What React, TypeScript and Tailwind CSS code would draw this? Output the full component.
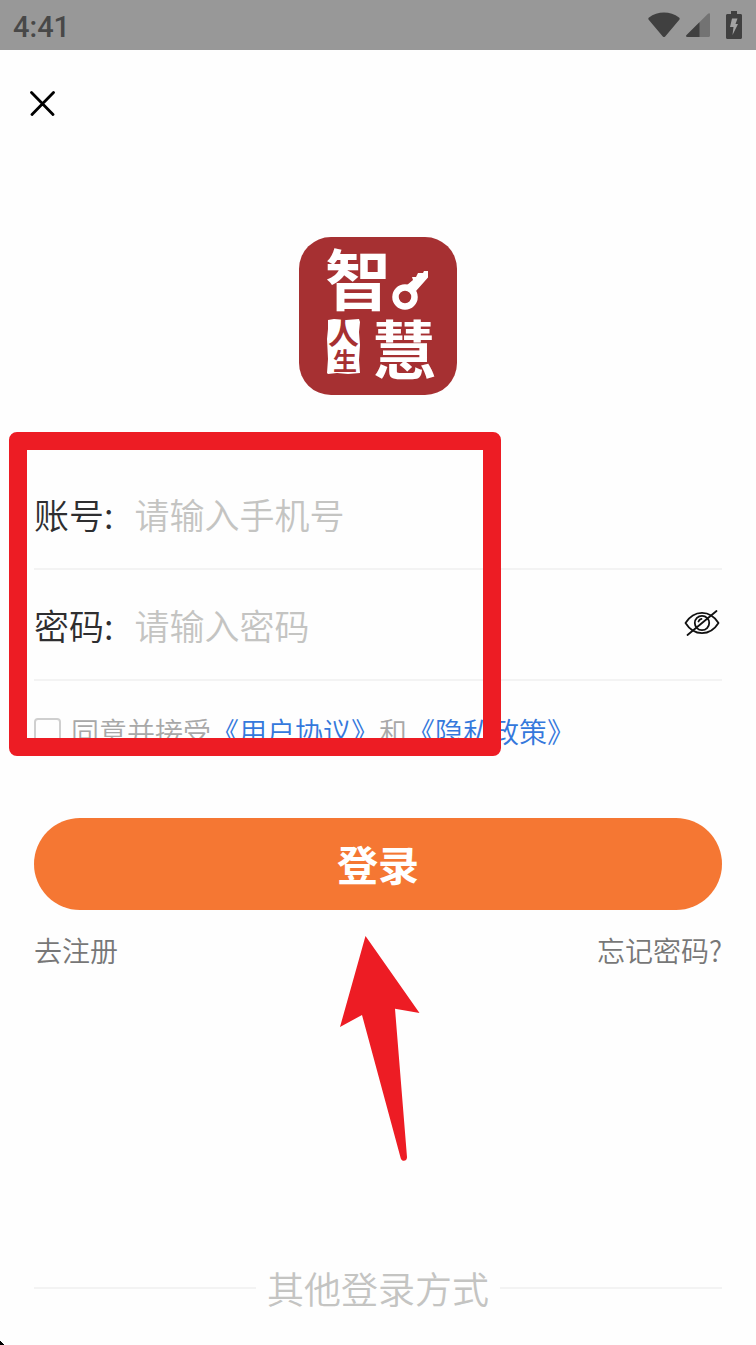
import React, { useState } from "react";

function StatusBar() {
  return (
    <header className="flex h-[50px] items-center justify-between bg-[#989898] pl-[13px] pr-[14px] text-[#484848]">
      <span className="pt-1 font-[Roboto,sans-serif] text-[29px] font-medium leading-8">
        4:41
      </span>
      <div className="flex items-center text-[#404040]">
        {/* Wifi */}
        <svg width="32" height="26" viewBox="0 0 32 26" fill="currentColor">
          <path d="M1 5.5C9.500-1.300 22.500-1.300 31 5.500c.8.700.9 1.500.3 2.200L17.200 24.400c-.8.900-1.600.9-2.400 0L.7 7.700C.1 7 .2 6.200 1 5.500z" />
        </svg>
        {/* Signal */}
        <svg
          className="ml-[6px]"
          width="24"
          height="26"
          viewBox="0 0 24 26"
          fill="currentColor"
        >
          <path
            d="M24 2.500v21c0 .9-.5 1.500-1.500 1.500H1.500C0 25-.3 24 .6 23L22 1.700c1-1 2-.6 2 .8z"
            fill="#737373"
          />
          <path d="M13.500 10.200V25h-12C0 25-.3 24 .6 23z" />
        </svg>
        {/* Battery */}
        <svg
          className="ml-4"
          width="16"
          height="28"
          viewBox="0 0 16 28"
          fill="currentColor"
        >
          <path d="M5 0h6v3h3.500c1 0 1.500.6 1.500 1.500v22c0 .9-.6 1.500-1.500 1.500h-13C.6 28 0 27.400 0 26.500v-22C0 3.600.6 3 1.500 3H5z" />
          <path d="M6 7.500h5.500L9.500 13H12L6.500 24l1-8H4z" fill="#a3a3a3" />
        </svg>
      </div>
    </header>
  );
}

function Logo() {
  return (
    <svg
      className="overflow-visible font-['Noto_Sans_CJK_SC',sans-serif] font-bold"
      width="158"
      height="158"
      viewBox="0 0 158 158"
      role="img"
      aria-label="智慧人生"
    >
      <rect width="158" height="158" rx="32" fill="#a63032" />
      <text x="26" y="68" fontSize="66" fill="#fff">
        智
      </text>
      <text x="73" y="137" fontSize="64" fill="#fff">
        慧
      </text>
      {/* Key */}
      <circle cx="106" cy="60" r="9.500" fill="none" stroke="#fff" strokeWidth="6.500" />
      <path
        d="M108 48l6-5-1-3 4 0 2-4 5 0 1-2h4v6.500L117 54l-8-3z"
        fill="#fff"
      />
      {/* Seal */}
      <path
        d="M29 83l6-1 12 1 13-1 1 3-1 10 1 13-1 15 1 13-12 1-11-1-9 1-1-1 1-14-1-20 1-10z"
        fill="#fff"
      />
      <text x="29" y="107" fontSize="31" fill="#a63032">
        人
      </text>
      <text x="34" y="133" fontSize="24" fill="#a63032">
        生
      </text>
    </svg>
  );
}

function EyeOffIcon() {
  return (
    <svg
      width="36"
      height="28"
      viewBox="0 0 36 28"
      fill="none"
      stroke="#111"
      strokeWidth="1.800"
      strokeLinecap="round"
    >
      <path d="M1.500 14C10 .500 26 .500 34.500 14 26 27.500 10 27.500 1.500 14z" strokeLinejoin="round" />
      <circle cx="18" cy="14" r="7.200" />
      <path d="M14.500 12.500c.5-1.500 1.500-2.300 3-2.600M3.500 26L32.500 2" />
    </svg>
  );
}

export default function App() {
  const [account, setAccount] = useState("");
  const [password, setPassword] = useState("");
  const [showPassword, setShowPassword] = useState(false);
  const [agreed, setAgreed] = useState(false);

  return (
    <div className="relative flex min-h-screen flex-col bg-[#fefefe] font-['Noto_Sans_CJK_SC',sans-serif] font-[350]">
      <StatusBar />

      <main className="flex flex-1 flex-col px-[34px]">
        <button type="button" aria-label="关闭" className="-ml-1 mt-10 self-start">
          <svg
            width="25"
            height="26"
            viewBox="0 0 25 26"
            stroke="#000"
            strokeWidth="2.800"
            strokeLinecap="round"
          >
            <path d="M1.500 2.500l21.500 22M23.500 2.500L2 24.500" />
          </svg>
        </button>

        <div className="mt-[121px] flex justify-center">
          <Logo />
        </div>

        <form
          className="relative mt-16"
          onSubmit={(e) => e.preventDefault()}
        >
          <div className="flex h-[111px] items-center gap-[21px] border-b-2 border-[#f3f3f3] text-[35px] leading-[50px]">
            <label htmlFor="account" className="shrink-0 text-[#2e2e30]">
              账号:
            </label>
            <input
              id="account"
              type="text"
              placeholder="请输入手机号"
              value={account}
              onChange={(e) => setAccount(e.target.value)}
              className="min-w-0 flex-1 bg-transparent outline-none placeholder:text-[#c4c4c2]"
            />
          </div>

          <div className="flex h-[111px] items-center gap-[21px] border-b-2 border-[#f3f3f3] text-[35px] leading-[50px]">
            <label htmlFor="password" className="shrink-0 text-[#2e2e30]">
              密码:
            </label>
            <input
              id="password"
              type={showPassword ? "text" : "password"}
              placeholder="请输入密码"
              value={password}
              onChange={(e) => setPassword(e.target.value)}
              className="min-w-0 flex-1 bg-transparent outline-none placeholder:text-[#c4c4c2]"
            />
            <button
              type="button"
              aria-label="显示密码"
              onClick={() => setShowPassword(!showPassword)}
              className="mb-1 mr-[2px]"
            >
              <EyeOffIcon />
            </button>
          </div>

          <div className="mt-[30px] flex items-center text-[28px] leading-10 text-[#a8a8a8]">
            <input
              id="agree"
              type="checkbox"
              checked={agreed}
              onChange={(e) => setAgreed(e.target.checked)}
              className="mr-[10px] size-[27px] appearance-none rounded border-2 border-[#cfcfcf] checked:bg-[#f57733]"
            />
            <label htmlFor="agree">同意并接受</label>
            <a href="#agreement" className="text-[#3478dc]">
              《用户协议》
            </a>
            和
            <a href="#privacy" className="text-[#3478dc]">
              《隐私政策》
            </a>
          </div>

          <button
            type="submit"
            className="mt-[67px] h-[92px] w-full rounded-full bg-[#f57733] text-[41px] font-bold text-white"
          >
            登录
          </button>

          {/* Highlight frame over the fields */}
          <div className="pointer-events-none absolute -left-[25px] -top-[27px] h-[324px] w-[492px] rounded-lg border-[18px] border-[#ed1c24]" />
        </form>

        <div className="relative mt-5 flex justify-between text-[28px] leading-10 text-[#777]">
          <a href="#register">去注册</a>
          <a href="#forgot">忘记密码?</a>

          {/* Arrow pointing at the login button */}
          <svg
            className="pointer-events-none absolute left-1/2 top-[6px] -ml-[38px]"
            width="80"
            height="226"
            viewBox="0 0 80 226"
            fill="#ed1c24"
          >
            <path d="M25.500 0L79.500 77 55 72.800 67 221c.2 4.500-5 5-6.200 1.500L22 79 0 91z" />
          </svg>
        </div>
      </main>

      <footer className="flex items-center gap-[11px] px-[34px] pb-8 text-[37px] leading-[50px] text-[#c4c4c2]">
        <span className="h-[2px] flex-1 bg-[#f3f3f3]" />
        其他登录方式
        <span className="h-[2px] flex-1 bg-[#f3f3f3]" />
      </footer>

      <svg
        className="absolute bottom-0 left-0"
        width="4"
        height="4"
        viewBox="0 0 4 4"
      >
        <path d="M0 0h1v1h1v1h1v1h1v1H0z" />
      </svg>
    </div>
  );
}
